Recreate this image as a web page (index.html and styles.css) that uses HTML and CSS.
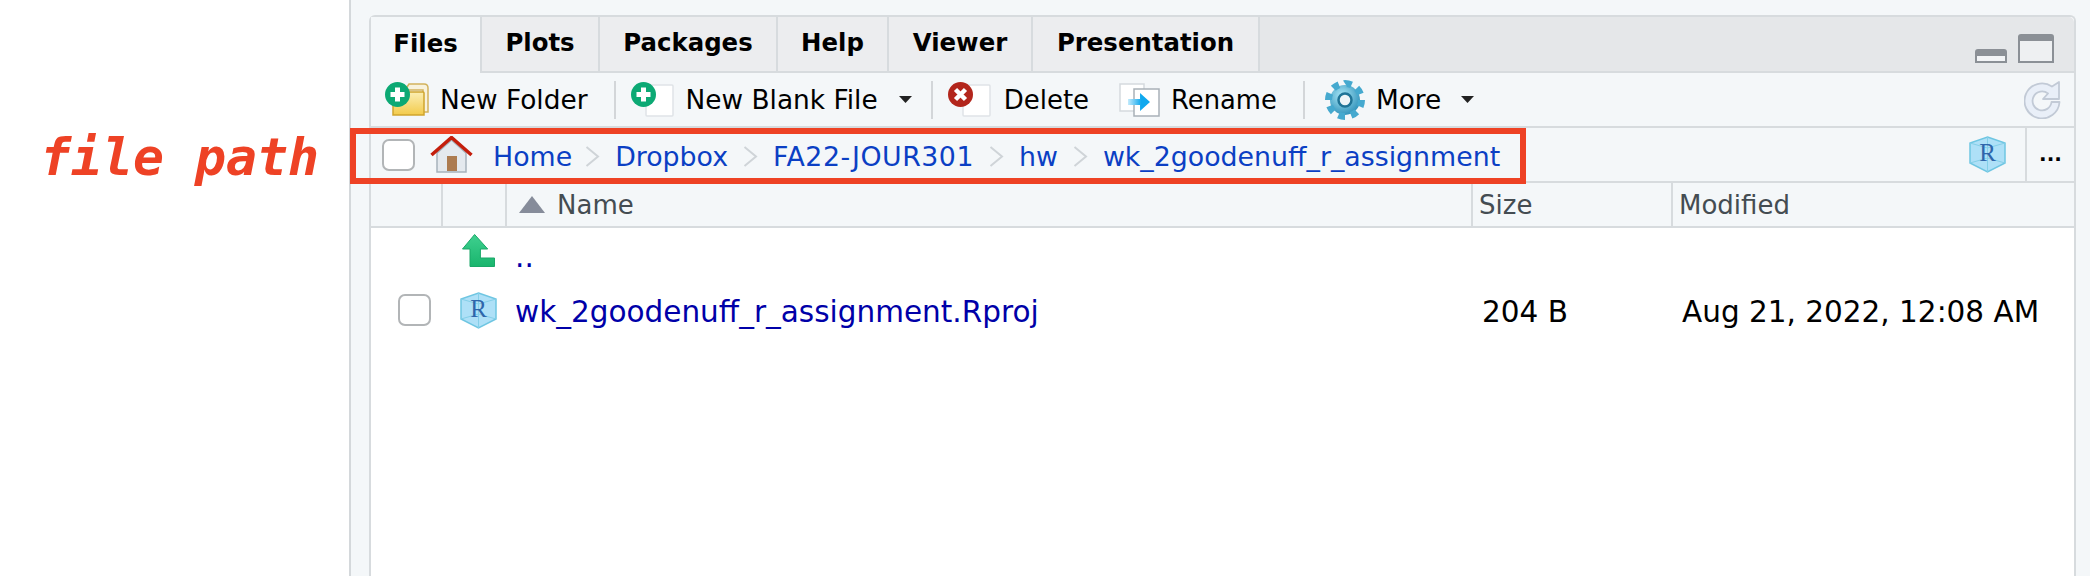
FILE: index.html
```html
<!DOCTYPE html>
<html lang="en">

<head>
    <meta charset="UTF-8">
    <meta name="viewport" content="width=device-width, initial-scale=1.0">
    <title>Files pane</title>
    <link rel="stylesheet" href="styles.css">
</head>

<body>
    <svg class="defs" width="0" height="0">
        <defs>
            <linearGradient id="arrow-blue" x1="0" x2="1" y1="0" y2="0">
                <stop offset="0" stop-color="#c4ebfc"/>
                <stop offset="0.6" stop-color="#10a8ee"/>
            </linearGradient>
            <linearGradient id="arrow-green" x1="0" x2="0" y1="0" y2="1">
                <stop offset="0" stop-color="#3fd08f"/>
                <stop offset="1" stop-color="#19b56d"/>
            </linearGradient>
            <linearGradient id="folder-yellow" x1="0" x2="0" y1="0" y2="1">
                <stop offset="0" stop-color="#fbeeb4"/>
                <stop offset="1" stop-color="#f3cb4b"/>
            </linearGradient>
            <radialGradient id="gear-blue" cx="0.4" cy="0.35" r="0.7">
                <stop offset="0" stop-color="#a8e6f6"/>
                <stop offset="1" stop-color="#2d8fb8"/>
            </radialGradient>
            <symbol id="rcube" viewBox="0 0 37 37">
                <path d="M18.5 1 L36 7 V27 L18.5 36 L1 27 V7 Z" fill="#aee0f7" stroke="#6fc6e2" stroke-width="1.5"/>
                <path d="M1 7 L18.5 12 L36 7 M18.500 1 V36 M1 27 L18.5 22 L36 27" fill="none" stroke="#84cfe8" stroke-width="1"/>
                <text x="18.5" y="25" text-anchor="middle" class="rcube-r">R</text>
            </symbol>
            <symbol id="blank" viewBox="0 0 29 33">
                <rect x="1" y="1" width="27" height="31" rx="1" fill="#fff" stroke="#dfe3e7" stroke-width="1.5"/>
            </symbol>
            <symbol id="caret" viewBox="0 0 13 7">
                <path d="M0 0 H13 L6.5 7 Z" fill="#222"/>
            </symbol>
            <symbol id="chevron" viewBox="0 0 15 21">
                <path d="M1.5 1 L13 10.5 L1.5 20" fill="none" stroke="#cfd4d8" stroke-width="2"/>
            </symbol>
        </defs>
    </svg>

    <aside class="note">
        <div class="note-text">file path</div>
    </aside>

    <main class="workspace">
        <div class="pane">
            <div class="tab-strip">
                <div class="tab tab-active">Files</div>
                <div class="tab tab-plots">Plots</div>
                <div class="tab tab-packages">Packages</div>
                <div class="tab tab-help">Help</div>
                <div class="tab tab-viewer">Viewer</div>
                <div class="tab tab-presentation">Presentation</div>
                <div class="window-buttons">
                    <div class="win-min"></div>
                    <div class="win-max"></div>
                </div>
            </div>

            <div class="toolbar">
                <div class="tool tool-folder">
                    <svg class="icon-45" viewBox="0 0 45 35">
                        <path d="M20 8 L24 2 H39 Q43 2 43 6 V30 H38 V8 Z" fill="#f8f2dc" stroke="#d2b25c" stroke-width="1.5"/>
                        <path d="M8 10 H38 Q39 10 39 11 V33 H8 Z" fill="url(#folder-yellow)" stroke="#cfa52e" stroke-width="1.5"/>
                        <circle cx="12.5" cy="12.5" r="12.5" fill="#0ca974"/>
                        <path d="M12.5 5.5 V19.5 M5.5 12.5 H19.5" stroke="#fff" stroke-width="5"/>
                    </svg>
                    <span>New Folder</span>
                </div>
                <div class="tool-sep sep-1"></div>
                <div class="tool tool-blank">
                    <div class="icon-stack">
                        <svg class="stack-page"><use href="#blank"/></svg>
                        <svg class="stack-badge" viewBox="0 0 25 25">
                            <circle cx="12.5" cy="12.5" r="12.5" fill="#0ca974"/>
                            <path d="M12.5 5.5 V19.5 M5.5 12.5 H19.5" stroke="#fff" stroke-width="5"/>
                        </svg>
                    </div>
                    <span>New Blank File</span>
                    <svg class="caret"><use href="#caret"/></svg>
                </div>
                <div class="tool-sep sep-2"></div>
                <div class="tool tool-delete">
                    <div class="icon-stack">
                        <svg class="stack-page"><use href="#blank"/></svg>
                        <svg class="stack-badge" viewBox="0 0 25 25">
                            <circle cx="12.5" cy="12.5" r="12.5" fill="#b3261c"/>
                            <path d="M7.5 7.5 L17.5 17.5 M17.5 7.5 L7.5 17.5" stroke="#fff" stroke-width="4.5"/>
                        </svg>
                    </div>
                    <span>Delete</span>
                </div>
                <div class="tool tool-rename">
                    <svg class="icon-rename" viewBox="0 0 41 34">
                        <rect x="1" y="1" width="24" height="27" fill="#fff" stroke="#d5dade" stroke-width="1.5"/>
                        <rect x="15" y="6" width="25" height="27" fill="#fff" stroke="#a9b1b8" stroke-width="1.5"/>
                        <path d="M9 16 H21 V10 L31 19 L21 28 V22 H9 Z" fill="url(#arrow-blue)"/>
                    </svg>
                    <span>Rename</span>
                </div>
                <div class="tool-sep sep-3"></div>
                <div class="tool tool-more">
                    <svg class="icon-gear" viewBox="0 0 40 40">
                        <circle cx="20" cy="20" r="15" fill="url(#gear-blue)"/>
                        <circle cx="20" cy="20" r="16.500" fill="none" stroke="#45a9cf" stroke-width="7" pathLength="8" stroke-dasharray="0.52 0.48"/>
                        <circle cx="20" cy="20" r="6.5" fill="#eef4f7" stroke="#1f7396" stroke-width="2.500"/>
                    </svg>
                    <span>More</span>
                    <svg class="caret"><use href="#caret"/></svg>
                </div>
                <svg class="icon-refresh" viewBox="0 0 38 38">
                    <path d="M28 5.5 L35 1 V18 H19 L24 12.5 A9.5 9.5 0 1 0 27.5 21 H35.5 A17.5 17.5 0 1 1 28 5.5 Z" fill="#e9eff8" stroke="#c2cad6" stroke-width="1.8" stroke-linejoin="round"/>
                </svg>
            </div>

            <div class="path-bar">
                <div class="checkbox path-check"></div>
                <svg class="icon-home" viewBox="0 0 43 37">
                    <path d="M7 17 L21.500 4 L36 17 V36 H7 Z" fill="#e4e9ee" stroke="#a6b2bc" stroke-width="1.500"/>
                    <rect x="17" y="20" width="10" height="15" fill="#ac7b50"/>
                    <path d="M1.500 19 L21.500 1.500 L41.500 19" fill="none" stroke="#c41e0c" stroke-width="3.500"/>
                </svg>
                <nav class="crumbs">
                    <a class="crumb-home">Home</a><svg class="chevron"><use href="#chevron"/></svg>
                    <a>Dropbox</a><svg class="chevron"><use href="#chevron"/></svg>
                    <a class="crumb-course">FA22-JOUR301</a><svg class="chevron"><use href="#chevron"/></svg>
                    <a>hw</a><svg class="chevron"><use href="#chevron"/></svg>
                    <a>wk_2goodenuff_r_assignment</a>
                </nav>
                <svg class="rcube project-cube"><use href="#rcube"/></svg>
                <div class="path-more">...</div>
            </div>

            <div class="file-table">
                <div class="file-head">
                    <div class="col-check"></div>
                    <div class="col-icon"></div>
                    <div class="col-name"><b class="sort-up"></b>Name</div>
                    <div class="col-size">Size</div>
                    <div class="col-date">Modified</div>
                </div>
                <div class="file-row">
                    <div class="cell-check"></div>
                    <div class="cell-icon">
                        <svg class="icon-up" viewBox="0 0 33 33">
                            <path d="M12.6 0.500 L25.7 15 H18.4 V24 H32.500 V32.500 H8 V15 H0.500 Z" fill="url(#arrow-green)" stroke="#1aa768" stroke-width="1" stroke-linejoin="round"/>
                        </svg>
                    </div>
                    <div class="cell-name file-link up-link">..</div>
                    <div></div>
                    <div></div>
                </div>
                <div class="file-row row-project">
                    <div class="cell-check"><div class="checkbox"></div></div>
                    <div class="cell-icon"><svg class="rcube"><use href="#rcube"/></svg></div>
                    <div class="cell-name file-link">wk_2goodenuff_r_assignment.Rproj</div>
                    <div class="cell-size">204 B</div>
                    <div class="cell-date">Aug 21, 2022, 12:08 AM</div>
                </div>
            </div>

            <!-- annotation over the path bar -->
            <div class="path-highlight"></div>
        </div>
    </main>
</body>

</html>
```
FILE: styles.css
```css
* {
    box-sizing: border-box;
}

html,
body {
    margin: 0;
    height: 100%;
    overflow: hidden;
}

body {
    display: flex;
    background-color: white;
    font-family: "DejaVu Sans", sans-serif;
    font-size: 26.4px;
    color: black;
}

.defs {
    position: absolute;
}

.rcube-r {
    font-family: "Liberation Serif", serif;
    font-size: 25px;
    fill: #2f66ab;
}

.note {
    width: 349px;
    flex-shrink: 0;
    padding: 124px 0 0 40px;
}

.note-text {
    font-family: "DejaVu Sans Mono", monospace;
    font-size: 51.5px;
    font-weight: bold;
    font-style: italic;
    line-height: 66px;
    color: #ee4225;
}

.workspace {
    flex: 1;
    background-color: #f4f7f9;
    border-left: 2px solid #d4d8db;
    padding: 15px 14px 0 18px;
}

.pane {
    position: relative;
    height: 100%;
    background-color: white;
    border: 2px solid #d7dbde;
    border-bottom: 0;
    border-radius: 6px 6px 0 0;
    display: flex;
    flex-direction: column;
}

.tab-strip {
    height: 56px;
    flex-shrink: 0;
    display: flex;
    background-color: #e5e7e9;
    border-bottom: 2px solid #d7dbde;
    border-radius: 5px 5px 0 0;
}

.tab {
    display: flex;
    align-items: center;
    justify-content: center;
    font-weight: bold;
    font-size: 24.4px;
    background-color: #ecedef;
    border-right: 2px solid #d7dbde;
    padding-bottom: 4px;
}

.tab-active {
    width: 111px;
    height: 56px;
    background-color: #f4f7f9;
    position: relative;
}

.tab-plots {
    width: 118px;
}

.tab-packages {
    width: 178px;
}

.tab-help {
    width: 111px;
}

.tab-viewer {
    width: 144px;
}

.tab-presentation {
    width: 227px;
}

.window-buttons {
    margin-left: auto;
    display: flex;
    align-items: flex-end;
    gap: 11px;
    padding: 0 20px 8px 0;
}

.win-min {
    width: 32px;
    height: 14px;
    border: 2px solid #8b9096;
    border-top-width: 7px;
    border-radius: 3px 3px 0 0;
    background-color: #f2f4f6;
}

.win-max {
    width: 36px;
    height: 29px;
    border: 2px solid #8b9096;
    border-top-width: 7px;
    border-radius: 3px 3px 0 0;
    background-color: #eef0f2;
}

.toolbar {
    height: 55px;
    flex-shrink: 0;
    display: flex;
    align-items: center;
    background-color: #f4f7f9;
    border-bottom: 2px solid #d7dbde;
    padding-left: 14px;
}

.tool {
    display: flex;
    align-items: center;
    white-space: nowrap;
}

.icon-45 {
    width: 45px;
    height: 35px;
}

.tool-folder span {
    margin-left: 10px;
}

.tool-sep {
    width: 2px;
    height: 38px;
    background-color: #d3d6d9;
}

.sep-1 {
    margin: 0 15px 0 26px;
}

.sep-2 {
    margin: 0 15px 0 19px;
}

.sep-3 {
    margin: 0 20px 0 26px;
}

.icon-stack {
    position: relative;
    width: 43px;
    height: 35px;
}

.stack-page {
    position: absolute;
    right: 0;
    bottom: 0;
    width: 29px;
    height: 33px;
}

.stack-badge {
    position: absolute;
    left: 0;
    top: 0;
    width: 25px;
    height: 25px;
}

.tool-blank span {
    margin-left: 12px;
}

.caret {
    width: 13px;
    height: 7px;
    margin-left: 21px;
}

.tool-delete span {
    margin-left: 13px;
    font-size: 26px;
}

.tool-rename {
    margin-left: 30px;
}

.icon-rename {
    width: 41px;
    height: 34px;
}

.tool-rename span {
    margin-left: 11px;
    font-size: 25.8px;
}

.icon-gear {
    width: 40px;
    height: 40px;
}

.tool-more span {
    margin-left: 11px;
}

.tool-more .caret {
    margin-left: 20px;
}

.icon-refresh {
    width: 38px;
    height: 38px;
    margin-left: auto;
    margin-right: 12px;
}

.path-bar {
    height: 55px;
    flex-shrink: 0;
    display: flex;
    align-items: center;
    background-color: #f4f7f9;
    border-bottom: 2px solid #d7dbde;
    padding-left: 11px;
}

.checkbox {
    width: 33px;
    height: 32px;
    background-color: white;
    border: 2px solid #b2b5b7;
    border-radius: 7px;
}

.icon-home {
    width: 43px;
    height: 37px;
    margin-left: 15px;
}

.crumbs {
    display: flex;
    align-items: center;
    margin-left: 20px;
    padding-top: 3px;
    font-size: 26.8px;
}

.crumbs a {
    color: #0b3fc4;
}

.crumb-home {
    margin-right: -2px;
}

.crumb-course {
    letter-spacing: 0.5px;
}

.chevron {
    width: 15px;
    height: 21px;
    margin: 0 15px;
}

.rcube {
    width: 37px;
    height: 37px;
}

.project-cube {
    margin-left: auto;
}

.path-more {
    width: 49px;
    height: 100%;
    margin-left: 19px;
    border-left: 2px solid #d7dbde;
    text-align: center;
    font-size: 20px;
    font-weight: bold;
    line-height: 52px;
}

.path-highlight {
    position: absolute;
    left: -21px;
    top: 111px;
    width: 1176px;
    height: 56px;
    border: 6px solid #ee4225;
}

.file-table {
    flex: 1;
    background-color: white;
}

.file-head,
.file-row {
    display: grid;
    grid-template-columns: 72px 64px 966px 200px 1fr;
    align-items: center;
}

.file-head {
    height: 45px;
    background-color: #f4f7f9;
    border-bottom: 2px solid #d7dbde;
    color: #444c52;
    font-size: 26px;
}

.file-head>div {
    height: 100%;
    display: flex;
    align-items: center;
    border-right: 2px solid #d7dbde;
}

.file-head>div:last-child {
    border-right: 0;
}

.col-name {
    padding-left: 12px;
}

.col-size,
.col-date {
    padding-left: 6px;
}

.sort-up {
    width: 0;
    height: 0;
    margin-right: 12px;
    border-left: 13px solid transparent;
    border-right: 13px solid transparent;
    border-bottom: 17px solid #868c9a;
}

.file-row {
    height: 54px;
    font-size: 29.5px;
}

.row-project {
    padding-top: 2px;
}

.row-project .cell-name,
.row-project .cell-size,
.row-project .cell-date {
    padding-top: 4px;
}

.cell-check {
    display: flex;
    justify-content: center;
    padding-left: 14px;
}

.cell-icon {
    display: flex;
    justify-content: center;
    padding-left: 6px;
}

.icon-up {
    width: 33px;
    height: 33px;
    margin-bottom: 10px;
}

.file-link {
    color: #0000a8;
    padding-left: 8px;
    white-space: nowrap;
}

.up-link {
    padding-top: 4px;
}

.cell-size {
    padding-left: 9px;
}

.cell-date {
    padding-left: 9px;
    white-space: nowrap;
}
```
